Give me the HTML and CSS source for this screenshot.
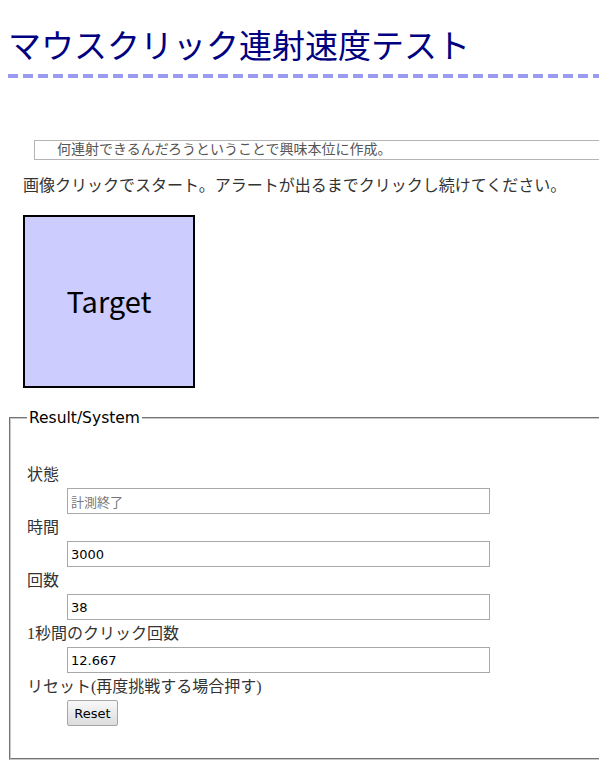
FILE: index.html
```html
<!DOCTYPE html>
<html lang="ja">
<head>
<meta charset="utf-8">
<title>マウスクリック連射速度テスト</title>
<link rel="stylesheet" href="styles.css">
</head>
<body>
<h1 class="title">マウスクリック連射速度テスト</h1>
<div class="note">何連射できるんだろうということで興味本位に作成。</div>
<p class="lead">画像クリックでスタート。アラートが出るまでクリックし続けてください。</p>
<div class="target">Target</div>
<fieldset class="result">
  <legend class="legend">Result/System</legend>
  <div class="label">状態</div>
  <input class="field field-status" type="text" value="計測終了">
  <div class="label">時間</div>
  <input class="field" type="text" value="3000">
  <div class="label">回数</div>
  <input class="field" type="text" value="38">
  <div class="label">1秒間のクリック回数</div>
  <input class="field" type="text" value="12.667">
  <div class="label">リセット(再度挑戦する場合押す)</div>
  <button class="reset" type="button">Reset</button>
</fieldset>
</body>
</html>
```

FILE: styles.css
```css
html {
  overflow: hidden;
}
body {
  margin: 8px 0 8px 8px;
  background: #fff;
  font-family: "Liberation Serif", "Noto Sans CJK JP", serif;
  color: #333;
  overflow: hidden;
}
.title {
  margin: 0;
  padding: 19px 0 11px 0;
  font-size: 33px;
  line-height: 40px;
  font-weight: normal;
  color: #000080;
  white-space: nowrap;
  background-image: repeating-linear-gradient(to right, #9a9af0 0 10px, transparent 10px 15px);
  background-size: 100% 4px;
  background-position: left bottom;
  background-repeat: no-repeat;
}
.note {
  margin: 62px -40px 0 26px;
  height: 18px;
  line-height: 18px;
  padding-left: 22px;
  border: 1px solid #b4b4b4;
  font-size: 14px;
  color: #555;
  white-space: nowrap;
}
.lead {
  margin: 14px 0 0 15px;
  font-size: 16px;
  line-height: 24px;
  color: #333;
  white-space: nowrap;
}
.target {
  margin: 17px 0 0 15px;
  width: 168px;
  height: 166px;
  padding-bottom: 3px;
  border: 2px solid #000;
  background: #ccccff;
  display: flex;
  align-items: center;
  justify-content: center;
  font-family: "Noto Sans CJK JP", sans-serif;
  font-size: 29px;
  color: #000;
}
.result {
  margin: 20px -40px 0 1px;
  padding: 33px 16px 32px 16px;
  border: 2px groove #c8c8c8;
}
.legend {
  padding: 0 2px;
  font-family: "DejaVu Sans", sans-serif;
  font-size: 15.5px;
  line-height: 20px;
  color: #000;
}
.label {
  font-size: 16px;
  line-height: 27px;
  color: #333;
  white-space: nowrap;
}
.field {
  display: block;
  margin: 0 0 0 40px;
  width: 423px;
  height: 26px;
  box-sizing: border-box;
  border: 1px solid #a9a9a9;
  padding: 0 3px;
  font-family: "DejaVu Sans", sans-serif;
  font-size: 13px;
  color: #000;
  background: #fff;
  outline: none;
}
.field-status {
  font-family: "Liberation Serif", "Noto Sans CJK JP", serif;
  color: #777;
}
.reset {
  display: block;
  margin: 0 0 0 40px;
  width: 51px;
  height: 26px;
  padding: 0;
  border: 1px solid #a6a6a6;
  border-radius: 2px;
  background: linear-gradient(#f8f8f8, #dcdcdc);
  font-family: "DejaVu Sans", sans-serif;
  font-size: 13px;
  color: #000;
}
```
